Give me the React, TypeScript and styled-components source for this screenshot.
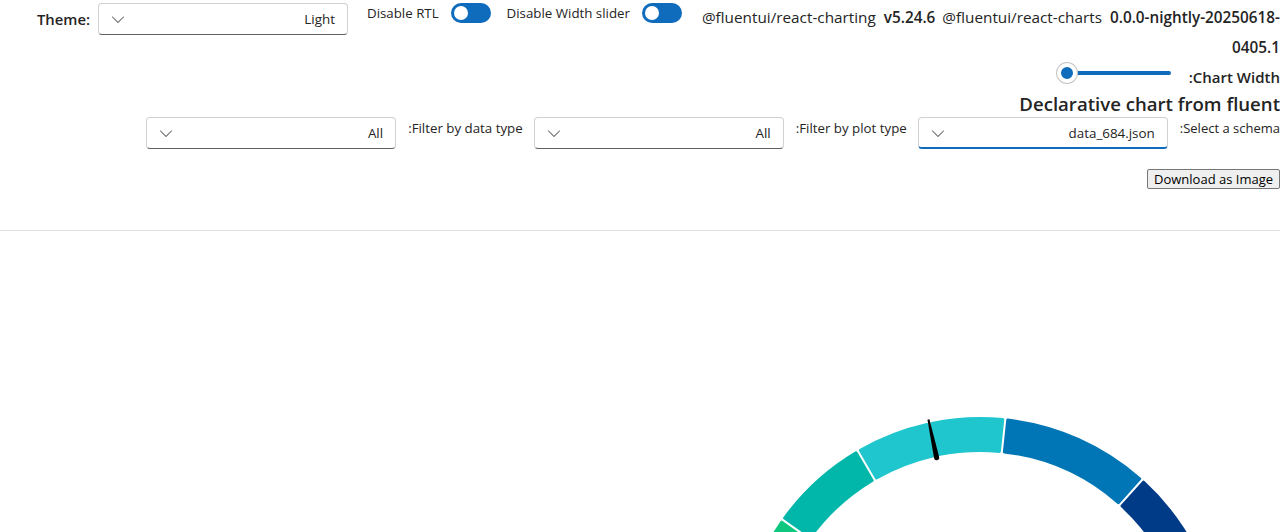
import React from "react";
import styled, { createGlobalStyle } from "styled-components";

const GlobalStyle = createGlobalStyle`
  html, body { margin: 0; padding: 0; background: #ffffff; overflow: hidden; }
  body { font-family: "Open Sans", "Noto Sans", Arial, sans-serif; color: #242424; }
  * { box-sizing: border-box; }
`;

const Page = styled.div`
  width: 1280px;
  display: flex;
  flex-direction: column;
`;

const TopBar = styled.div`
  display: flex;
  align-items: flex-start;
  padding: 3px 0 0 37px;
`;

const ThemeGroup = styled.div`
  display: flex;
  align-items: center;
  gap: 8px;
`;

const ThemeLabel = styled.label`
  font-size: 14.8px;
  font-weight: 600;
`;

const DropdownBox = styled.div<{ $focused?: boolean }>`
  width: 250px;
  height: 32px;
  display: flex;
  align-items: center;
  justify-content: space-between;
  padding: 0 12px 0 9px;
  border: 1px solid #d1d1d1;
  border-bottom: ${(p) => (p.$focused ? "2px solid #0f6cbd" : "1px solid #616161")};
  border-radius: 4px;
  background: #ffffff;
  font-size: 13.4px;
  color: #242424;
  direction: ltr;
`;

const Chevron = styled.svg`
  width: 20px;
  height: 20px;
  fill: #616161;
`;

const Dropdown = ({ value, focused }: { value: string; focused?: boolean }) => (
  <DropdownBox $focused={focused}>
    <Chevron viewBox="0 0 20 20">
      <path d="M15.85 7.65c.2.2.2.5 0 .7l-5.46 5.49a.55.55 0 0 1-.78 0L4.15 8.35a.5.5 0 1 1 .7-.7L10 12.8l5.15-5.16c.2-.2.5-.2.7 0Z" />
    </Chevron>
    <span>{value}</span>
  </DropdownBox>
);

const SwitchGroup = styled.div<{ $ml: number }>`
  display: flex;
  align-items: center;
  gap: 12px;
  margin-left: ${(p) => p.$ml}px;
  height: 20px;
  font-size: 13.3px;
`;

const SwitchTrack = styled.div`
  width: 40px;
  height: 20px;
  border-radius: 10px;
  background: #0f6cbd;
  display: flex;
  align-items: center;
  padding-left: 3px;
`;

const SwitchThumb = styled.div`
  width: 14px;
  height: 14px;
  border-radius: 50%;
  background: #ffffff;
`;

const Switch = () => (
  <SwitchTrack>
    <SwitchThumb />
  </SwitchTrack>
);

const Versions = styled.div`
  flex: 1;
  margin-left: 15px;
  margin-top: -1px;
  font-size: 15.3px;
  line-height: 30px;
  text-align: right;
`;

const PkgName = styled.span<{ $first?: boolean }>`
  margin-left: ${(p) => (p.$first ? 0 : 7)}px;
`;

const PkgVersion = styled.b`
  font-weight: 600;
  margin-left: 8px;
`;

const RtlSection = styled.div`
  direction: rtl;
  display: flex;
  flex-direction: column;
  align-items: flex-start;
`;

const SliderRow = styled.div`
  display: flex;
  align-items: center;
  gap: 15px;
  margin-top: 1px;
  height: 20px;
`;

const SliderLabel = styled.label`
  font-size: 15px;
  font-weight: 600;
  padding-top: 7px;
`;

const SliderRoot = styled.div`
  position: relative;
  width: 117px;
  height: 20px;
  display: flex;
  align-items: center;
`;

const SliderRail = styled.div`
  height: 4px;
  width: 110px;
  margin-right: 3px;
  border-radius: 2px;
  background: #0f6cbd;
`;

const SliderThumb = styled.div`
  position: absolute;
  left: 0;
  top: 0;
  width: 20px;
  height: 20px;
  border-radius: 50%;
  background: #0f6cbd;
  border: 4px solid #ffffff;
  box-shadow: 0 0 0 1px #c7c7c7;
`;

const Heading = styled.h2`
  margin: 8px 0 0 0;
  font-size: 18.6px;
  font-weight: 600;
  line-height: 26px;
`;

const FilterRow = styled.div`
  display: flex;
  align-items: flex-start;
  gap: 11px;
`;

const FilterGroup = styled.div`
  display: flex;
  align-items: flex-start;
  gap: 12px;
`;

const FilterLabel = styled.label`
  font-size: 13.3px;
  line-height: 20px;
  padding-top: 1px;
`;

const SchemaLabel = styled(FilterLabel)`
  font-size: 13px;
`;

const ButtonRow = styled.div`
  margin-top: 18px;
`;

const DownloadButton = styled.button`
  direction: ltr;
  font-family: "Open Sans", Arial, sans-serif;
  font-size: 13px;
  height: 20px;
  padding: 0 6px;
  line-height: 16px;
  background: #efefef;
  color: #000000;
  border: 1px solid #767676;
  border-radius: 2px;
`;

const Divider = styled.div`
  margin-top: 41px;
  height: 1px;
  background: #e0e0e0;
`;

const ChartArea = styled.div`
  height: 320px;
  overflow: hidden;
`;

const CX = 980;
const CY = 429;
const R_OUT = 243;
const R_IN = 208;

const polar = (r: number, deg: number): [number, number] => {
  const a = (deg * Math.PI) / 180;
  return [CX + r * Math.sin(a), CY - r * Math.cos(a)];
};

const sectorPath = (a0: number, a1: number) => {
  const inset = 2.5;
  const ro = R_OUT - 1.5;
  const ri = R_IN + 1.5;
  const d = (r: number) => ((inset / r) * 180) / Math.PI;
  const p0 = polar(ro, a0 + d(ro));
  const p1 = polar(ro, a1 - d(ro));
  const p2 = polar(ri, a1 - d(ri));
  const p3 = polar(ri, a0 + d(ri));
  const large = a1 - a0 > 180 ? 1 : 0;
  return `M${p0[0]},${p0[1]} A${ro},${ro} 0 ${large} 1 ${p1[0]},${p1[1]} L${p2[0]},${p2[1]} A${ri},${ri} 0 ${large} 0 ${p3[0]},${p3[1]} Z`;
};

const segments = [
  { a0: -90, a1: -54.6, color: "#10c77f" },
  { a0: -54.6, a1: -30.3, color: "#00b7aa" },
  { a0: -30.3, a1: -12.1, color: "#20c6ce" },
  { a0: -12.1, a1: 6.0, color: "#20c6ce" },
  { a0: 6.0, a1: 42.0, color: "#0076b6" },
  { a0: 42.0, a1: 90, color: "#003b88" },
];

const needlePath = () => {
  const deg = -12.1;
  const a = (deg * Math.PI) / 180;
  const px = Math.cos(a);
  const py = Math.sin(a);
  const [tx, ty] = polar(246, deg);
  const [bx, by] = polar(207, deg);
  const wt = 1;
  const wb = 2.6;
  return `M${tx - px * wt},${ty - py * wt} L${tx + px * wt},${ty + py * wt} L${bx + px * wb},${by + py * wb} A${wb},${wb} 0 0 1 ${bx - px * wb},${by - py * wb} Z`;
};

const GaugeSvg = styled.svg`
  display: block;
`;

const Gauge = () => (
  <GaugeSvg width={1280} height={320}>
    {segments.map((s, i) => (
      <path
        key={i}
        d={sectorPath(s.a0, s.a1)}
        fill={s.color}
        stroke={s.color}
        strokeWidth={3}
        strokeLinejoin="round"
      />
    ))}
    <path d={needlePath()} fill="#000000" />
  </GaugeSvg>
);

export default function App() {
  return (
    <Page>
      <GlobalStyle />
      <TopBar>
        <ThemeGroup>
          <ThemeLabel>Theme:</ThemeLabel>
          <Dropdown value="Light" />
        </ThemeGroup>
        <SwitchGroup $ml={19}>
          <span>Disable RTL</span>
          <Switch />
        </SwitchGroup>
        <SwitchGroup $ml={16}>
          <span>Disable Width slider</span>
          <Switch />
        </SwitchGroup>
        <Versions>
          <PkgName $first>@fluentui/react-charting</PkgName>
          <PkgVersion>v5.24.6</PkgVersion>
          <PkgName>@fluentui/react-charts</PkgName>
          <PkgVersion>0.0.0-nightly-20250618-0405.1</PkgVersion>
        </Versions>
      </TopBar>
      <RtlSection dir="rtl">
        <SliderRow>
          <SliderLabel>Chart Width:</SliderLabel>
          <SliderRoot>
            <SliderRail />
            <SliderThumb />
          </SliderRoot>
        </SliderRow>
        <Heading>Declarative chart from fluent</Heading>
        <FilterRow>
          <FilterGroup>
            <SchemaLabel>Select a schema:</SchemaLabel>
            <Dropdown value="data_684.json" focused />
          </FilterGroup>
          <FilterGroup>
            <FilterLabel>Filter by plot type:</FilterLabel>
            <Dropdown value="All" />
          </FilterGroup>
          <FilterGroup>
            <FilterLabel>Filter by data type:</FilterLabel>
            <Dropdown value="All" />
          </FilterGroup>
        </FilterRow>
        <ButtonRow>
          <DownloadButton>Download as Image</DownloadButton>
        </ButtonRow>
      </RtlSection>
      <Divider />
      <ChartArea>
        <Gauge />
      </ChartArea>
    </Page>
  );
}
